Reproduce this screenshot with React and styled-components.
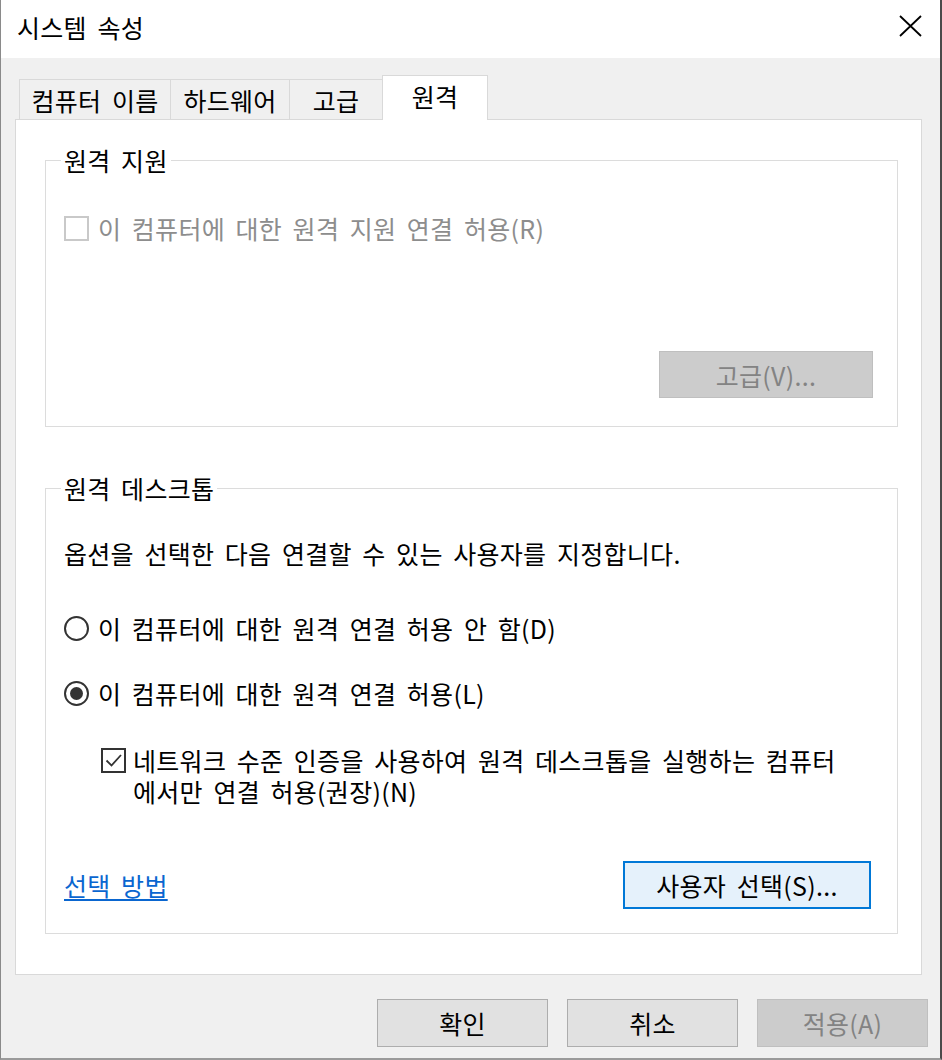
import React from "react";
import styled, { createGlobalStyle } from "styled-components";

const Global = createGlobalStyle`
  html, body { margin: 0; padding: 0; background: #ffffff; }
  body {
    font-family: "Malgun Gothic", "Noto Sans CJK KR", "Noto Sans", sans-serif;
    font-size: 25px;
    letter-spacing: 0.3px;
    word-spacing: 4.6px;
    color: #000;
  }
  * { box-sizing: border-box; }
`;

const Window = styled.div`
  width: 942px;
  height: 1060px;
  display: flex;
  flex-direction: column;
  background: #f0f0f0;
  border-left: 1px solid #8a8a8a;
  border-right: 2px solid #4a4a4a;
  border-bottom: 2px solid #9a9a9a;
`;

const TitleBar = styled.div`
  height: 58px;
  flex: none;
  background: #ffffff;
  display: flex;
  align-items: center;
  justify-content: space-between;
  padding: 0 18px 0 16px;
`;

const Title = styled.div`
  font-size: 25px;
  line-height: 30px;
  margin-top: -4px;
`;

const CloseButton = styled.button`
  border: 0;
  background: transparent;
  padding: 0;
  width: 24px;
  height: 24px;
  display: flex;
  align-items: center;
  justify-content: center;
  margin-top: -6px;
`;

const Content = styled.div`
  padding: 17px 18px 0 14px;
`;

const TabRow = styled.div`
  display: flex;
  align-items: flex-end;
  padding-left: 4px;
  margin-bottom: -1px;
  position: relative;
  z-index: 1;
`;

const Tab = styled.div`
  width: ${(p) => p.$w}px;
  height: ${(p) => (p.$active ? 45 : 40)}px;
  margin-bottom: ${(p) => (p.$active ? 0 : 1)}px;
  margin-left: -1px;
  background: ${(p) => (p.$active ? "#ffffff" : "#f0f0f0")};
  border: 1px solid #d9d9d9;
  border-bottom: none;
  display: flex;
  align-items: center;
  justify-content: center;
  font-size: 25px;
  line-height: 30px;
  padding-bottom: ${(p) => (p.$active ? 4 : 0)}px;
  white-space: nowrap;
  &:first-child { margin-left: 0; }
`;

const Panel = styled.div`
  height: 856px;
  background: #ffffff;
  border: 1px solid #d9d9d9;
  padding: 25px 23px 0 29px;
`;

const Group = styled.fieldset`
  margin: ${(p) => p.$mt || 0}px 0 0 0;
  padding: 0 24px ${(p) => p.$pb}px 18px;
  border: 1px solid #dcdcdc;
  min-width: 0;
  display: flex;
  flex-direction: column;
`;

const Legend = styled.legend`
  padding: 0 3px;
  margin-left: -3px;
  font-size: 25px;
  line-height: 30px;
`;

const Row = styled.div`
  display: flex;
  align-items: ${(p) => (p.$top ? "flex-start" : "center")};
  margin-top: ${(p) => p.$mt || 0}px;
  margin-left: ${(p) => p.$indent || 0}px;
  gap: ${(p) => p.$gap ?? 9}px;
`;

const Label = styled.div`
  font-size: 25px;
  line-height: ${(p) => (p.$multi ? 31 : 30)}px;
  white-space: nowrap;
  color: ${(p) => (p.$disabled ? "#8d8d8d" : "#000")};
`;

const CheckBox = styled.span`
  flex: none;
  width: 25px;
  height: 25px;
  border: 2px solid ${(p) => (p.$disabled ? "#c9c9c9" : "#333333")};
  background: #ffffff;
  display: flex;
  align-items: center;
  justify-content: center;
  margin-top: ${(p) => (p.$top ? 3 : 0)}px;
`;

const Radio = styled.span`
  flex: none;
  width: 25px;
  height: 25px;
  border-radius: 50%;
  border: 2px solid #333333;
  background: #ffffff;
  display: flex;
  align-items: center;
  justify-content: center;
  &::after {
    content: "";
    width: 13px;
    height: 13px;
    border-radius: 50%;
    background: ${(p) => (p.$checked ? "#333333" : "transparent")};
  }
`;

const ButtonRow = styled.div`
  display: flex;
  align-items: center;
  justify-content: ${(p) => p.$justify || "flex-end"};
  margin-top: ${(p) => p.$mt || 0}px;
`;

const Button = styled.button`
  width: ${(p) => p.$w}px;
  height: ${(p) => p.$h}px;
  font-family: inherit;
  font-size: 25px;
  line-height: 30px;
  letter-spacing: inherit;
  word-spacing: inherit;
  padding: 0;
  margin-right: ${(p) => p.$mr || 0}px;
  background: ${(p) =>
    p.$variant === "disabled" ? "#cccccc" : p.$variant === "focus" ? "#e5f1fb" : "#e1e1e1"};
  border: ${(p) =>
    p.$variant === "disabled"
      ? "1px solid #bfbfbf"
      : p.$variant === "focus"
      ? "2px solid #0078d7"
      : "1px solid #adadad"};
  color: ${(p) => (p.$variant === "disabled" ? "#838383" : "#000")};
`;

const Link = styled.a`
  font-size: 25px;
  line-height: 30px;
  color: #0a66d0;
  text-decoration: underline;
  text-decoration-thickness: 2px;
  text-underline-offset: 3px;
  cursor: pointer;
`;

const Footer = styled.div`
  display: flex;
  justify-content: flex-end;
  gap: 19px;
  margin-top: 24px;
  padding-right: 12px;
`;

const CloseIcon = () => (
  <svg width="23" height="22" viewBox="0 0 23 22">
    <path d="M1 1 L22 21 M22 1 L1 21" stroke="#000" strokeWidth="1.8" fill="none" />
  </svg>
);

const CheckMark = () => (
  <svg width="19" height="19" viewBox="0 0 19 19">
    <path d="M2.5 9.5 L7.5 14.5 L17 4" stroke="#333" strokeWidth="1.8" fill="none" />
  </svg>
);

export default function App() {
  return (
    <>
      <Global />
      <Window>
        <TitleBar>
          <Title>시스템 속성</Title>
          <CloseButton aria-label="닫기">
            <CloseIcon />
          </CloseButton>
        </TitleBar>
        <Content>
          <TabRow>
            <Tab $w={152}>컴퓨터 이름</Tab>
            <Tab $w={120}>하드웨어</Tab>
            <Tab $w={94}>고급</Tab>
            <Tab $w={106} $active>
              원격
            </Tab>
          </TabRow>
          <Panel>
            <Group $pb={28}>
              <Legend>원격 지원</Legend>
              <Row $mt={38}>
                <CheckBox $disabled />
                <Label $disabled>이 컴퓨터에 대한 원격 지원 연결 허용(R)</Label>
              </Row>
              <ButtonRow $mt={108}>
                <Button $w={214} $h={47} $variant="disabled">
                  고급(V)...
                </Button>
              </ButtonRow>
            </Group>
            <Group $mt={46} $pb={24}>
              <Legend>원격 데스크톱</Legend>
              <Row $mt={35}>
                <Label>옵션을 선택한 다음 연결할 수 있는 사용자를 지정합니다.</Label>
              </Row>
              <Row $mt={45}>
                <Radio />
                <Label>이 컴퓨터에 대한 원격 연결 허용 안 함(D)</Label>
              </Row>
              <Row $mt={35}>
                <Radio $checked />
                <Label>이 컴퓨터에 대한 원격 연결 허용(L)</Label>
              </Row>
              <Row $mt={37} $indent={37} $gap={7} $top>
                <CheckBox $top>
                  <CheckMark />
                </CheckBox>
                <Label $multi>
                  네트워크 수준 인증을 사용하여 원격 데스크톱을 실행하는 컴퓨터
                  <br />
                  에서만 연결 허용(권장)(N)
                </Label>
              </Row>
              <ButtonRow $mt={54} $justify="space-between">
                <Link>선택 방법</Link>
                <Button $w={248} $h={48} $variant="focus" $mr={2}>
                  사용자 선택(S)...
                </Button>
              </ButtonRow>
            </Group>
          </Panel>
        </Content>
        <Footer>
          <Button $w={171} $h={48}>
            확인
          </Button>
          <Button $w={171} $h={48}>
            취소
          </Button>
          <Button $w={171} $h={48} $variant="disabled">
            적용(A)
          </Button>
        </Footer>
      </Window>
    </>
  );
}
